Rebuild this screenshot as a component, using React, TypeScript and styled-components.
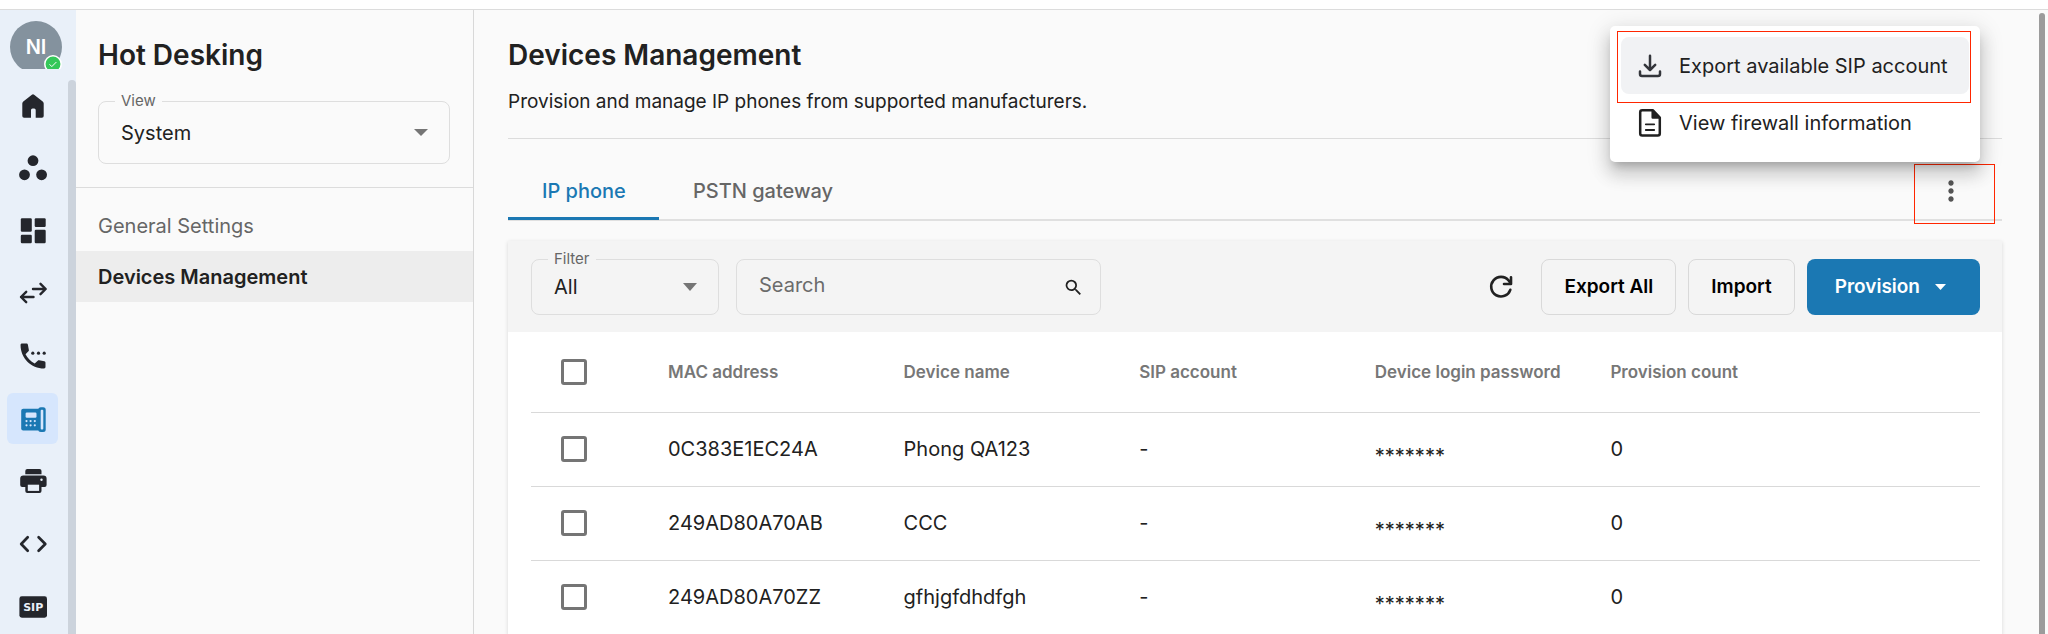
import React from 'react';
import styled, { createGlobalStyle } from 'styled-components';
import { MdSearch, MdMoreVert } from 'react-icons/md';

const Global = createGlobalStyle`
  *, *::before, *::after { box-sizing: border-box; }
  html, body, #root { height: 100%; }
  body {
    margin: 0;
    overflow: hidden;
    background: #fafafa;
    color: #212121;
    font-family: Inter, "Liberation Sans", sans-serif;
    font-size: 20px;
    line-height: 28px;
  }
  button, input, select { font: inherit; color: inherit; margin: 0; }
  ul { list-style: none; margin: 0; padding: 0; }
  h1, h2, p { margin: 0; }
`;

const Page = styled.div`
  height: 100%;
  display: flex;
  flex-direction: column;
`;

const TopStrip = styled.div`
  height: 10px;
  flex: none;
  background: #fff;
  border-bottom: 1px solid #dcdcdc;
`;

const Body = styled.div`
  flex: 1;
  min-height: 0;
  display: flex;
`;

/* Icon rail */

const Rail = styled.aside`
  width: 76px;
  flex: none;
  background: #e9f0f9;
  display: flex;
  flex-direction: column;
`;

const AvatarClip = styled.div`
  position: relative;
  width: 54px;
  height: 48px;
  margin: 11px 0 0 10px;
  flex: none;
  overflow: hidden;
`;

const Avatar = styled.button`
  width: 52px;
  height: 52px;
  border: 0;
  padding: 0;
  border-radius: 50%;
  background: #84929e;
  && { color: #fff; }
  font-weight: 600;
`;

const Presence = styled.svg`
  position: absolute;
  left: 34px;
  top: 34px;
`;

const RailScroll = styled.div`
  position: relative;
  flex: 1;
  min-height: 0;
  overflow: hidden;
  margin-top: 11px;
`;

const RailThumb = styled.div`
  position: absolute;
  right: 0;
  top: 0;
  bottom: 0;
  width: 8px;
  border-radius: 4px 4px 0 0;
  background: #ccd3dc;
`;

const RailList = styled.ul`
  display: flex;
  flex-direction: column;
  justify-content: space-between;
  height: 552px;
  padding-left: 7px;
`;

const RailLink = styled.a<{ $active?: boolean }>`
  display: flex;
  align-items: center;
  justify-content: center;
  width: 51px;
  height: 51px;
  border-radius: 6px;
  color: ${(p) => (p.$active ? '#1b78b3' : '#24262c')};
  background: ${(p) => (p.$active ? '#d6e6fd' : 'transparent')};
`;

/* Section panel */

const Panel = styled.aside`
  width: 398px;
  flex: none;
  border-right: 1px solid #d8d8d8;
`;

const PanelHead = styled.div`
  padding: 26px 23px 23px 22px;
  border-bottom: 1px solid #dcdcdc;
`;

const Title = styled.h1`
  font-size: 28px;
  line-height: 38px;
  font-weight: 600;
`;

const PanelList = styled.ul`
  padding-top: 12px;
`;

const PanelLink = styled.a<{ $active?: boolean }>`
  display: flex;
  align-items: center;
  height: 51px;
  padding: 0 22px;
  text-decoration: none;
  color: ${(p) => (p.$active ? '#212121' : '#666')};
  font-weight: ${(p) => (p.$active ? 600 : 400)};
  background: ${(p) => (p.$active ? '#ededed' : 'transparent')};
`;

/* Fields */

const FieldBox = styled.div<{ $w?: number; $h: number; $mt?: number }>`
  position: relative;
  flex: none;
  width: ${(p) => (p.$w ? p.$w + 'px' : 'auto')};
  height: ${(p) => p.$h}px;
  margin-top: ${(p) => p.$mt || 0}px;
`;

const FieldLabel = styled.label<{ $bg: string }>`
  position: absolute;
  left: 17px;
  top: -10px;
  padding: 0 6px;
  font-size: 15px;
  line-height: 20px;
  color: #666;
  background: ${(p) => p.$bg};
`;

const Select = styled.select`
  appearance: none;
  width: 100%;
  height: 100%;
  padding: 0 48px 0 22px;
  border: 1px solid #dedede;
  border-radius: 8px;
  background: transparent;
`;

const FieldIcon = styled.span<{ $right: number }>`
  position: absolute;
  right: ${(p) => p.$right}px;
  top: 0;
  bottom: 0;
  display: flex;
  align-items: center;
  pointer-events: none;
`;

const SearchInput = styled.input`
  width: 100%;
  height: 100%;
  padding: 0 48px 4px 22px;
  border: 1px solid #dedede;
  border-radius: 8px;
  background: transparent;
  &::placeholder { color: #6b6b6b; opacity: 1; }
`;

/* Main area */

const Main = styled.main`
  position: relative;
  flex: 1;
  min-width: 0;
  padding: 26px 46px 0 34px;
`;

const MainThumb = styled.div`
  position: absolute;
  right: 3px;
  top: 3px;
  bottom: 0;
  width: 6px;
  border-radius: 3px 3px 0 0;
  background: #9b9b9b;
`;

const Intro = styled.p`
  padding: 14px 0 22px;
  font-size: 19px;
  border-bottom: 1px solid #dcdcdc;
`;

const TabBar = styled.div`
  display: flex;
  align-items: flex-end;
  height: 82px;
  border-bottom: 2px solid #e0e0e0;
`;

const Tab = styled.button<{ $active?: boolean }>`
  height: 56px;
  padding: 1px 33px 0 34px;
  border: 0;
  border-bottom: 3px solid ${(p) => (p.$active ? '#1b78b3' : 'transparent')};
  margin-bottom: -1px;
  background: none;
  font-weight: 500;
  && { color: ${(p) => (p.$active ? '#1b78b3' : '#666')}; }
`;

const MenuAnchor = styled.div`
  position: relative;
  margin-left: auto;
  margin-right: 22px;
  height: 56px;
  display: flex;
  align-items: center;
`;

const KebabButton = styled.button`
  display: flex;
  align-items: center;
  justify-content: center;
  width: 58px;
  height: 56px;
  padding: 0;
  border: 0;
  background: none;
  && { color: #555; }
`;

const Highlight = styled.span<{ $inset: string }>`
  position: absolute;
  inset: ${(p) => p.$inset};
  border: 1px solid #ff2600;
  pointer-events: none;
`;

const Menu = styled.div`
  position: absolute;
  right: 0;
  bottom: 57px;
  width: 370px;
  height: 136px;
  padding: 11px 11px 0;
  border-radius: 5px;
  background: #fff;
  box-shadow: 0 7px 8px -4px rgba(0, 0, 0, 0.2), 0 12px 17px 2px rgba(0, 0, 0, 0.13), 0 5px 22px 4px rgba(0, 0, 0, 0.1);
`;

const MenuItem = styled.button<{ $active?: boolean }>`
  position: relative;
  display: flex;
  align-items: center;
  gap: 13px;
  width: 100%;
  height: 57px;
  padding: 0 0 0 13px;
  border: 0;
  border-radius: 8px;
  white-space: nowrap;
  background: ${(p) => (p.$active ? '#f1f2f4' : 'none')};
`;

/* Device card */

const Card = styled.section`
  margin-top: 20px;
  background: #fff;
  box-shadow: 0 1px 4px rgba(0, 0, 0, 0.14);
`;

const Toolbar = styled.div`
  display: flex;
  align-items: center;
  gap: 12px;
  padding: 18px 22px 17px 23px;
  background: #f4f4f4;
`;

const FilterGroup = styled.div`
  display: flex;
  gap: 17px;
  margin-right: auto;
`;

const IconButton = styled.button`
  display: flex;
  padding: 0;
  margin-right: 12px;
  border: 0;
  background: none;
`;

const Button = styled.button<{ $primary?: boolean }>`
  display: flex;
  align-items: center;
  justify-content: center;
  gap: 15px;
  height: 56px;
  padding: ${(p) => (p.$primary ? '0 34px 0 28px' : '0 22px')};
  border: ${(p) => (p.$primary ? '0' : '1px solid #d9d9d9')};
  border-radius: 8px;
  background: ${(p) => (p.$primary ? '#1b78b3' : 'transparent')};
  && {
    font-size: 19px;
    font-weight: 600;
    color: ${(p) => (p.$primary ? '#fff' : '#000')};
  }
`;

const TableWrap = styled.div`
  padding: 0 22px 0 23px;
`;

const Table = styled.table`
  width: 100%;
  table-layout: fixed;
  border-collapse: collapse;
`;

const CheckCol = styled.col`
  width: 114px;
`;

const EndCol = styled.col`
  width: 157px;
`;

const HeadCell = styled.th`
  height: 80px;
  padding: 0 0 0 23px;
  text-align: left;
  font-size: 17px;
  font-weight: 600;
  color: #777;
  white-space: nowrap;
  border-bottom: 1px solid #d9d9d9;
`;

const Cell = styled.td`
  height: 74px;
  padding: 0 0 0 23px;
  border-bottom: 1px solid #d9d9d9;
`;

const Secret = styled.span`
  display: block;
  padding-top: 14px;
  line-height: 20px;
`;

const Check = styled.input`
  appearance: none;
  display: block;
  width: 26px;
  height: 26px;
  border: 3px solid #757575;
  border-radius: 3px;
  && { margin-left: 7px; }
`;

const Caret = ({ w, h, fill }: { w: number; h: number; fill: string }) => (
  <svg width={w} height={h} viewBox="0 0 14 7" preserveAspectRatio="none" aria-hidden="true">
    <path d="M0 0h14L7 7z" fill={fill} />
  </svg>
);

const RailIcon = ({ children }: { children: React.ReactNode }) => (
  <svg width="32" height="32" viewBox="0 0 32 32" fill="currentColor" aria-hidden="true">
    {children}
  </svg>
);

const railItems: { name: string; active?: boolean; icon: React.ReactNode }[] = [
  {
    name: 'Home',
    icon: (
      <path d="M5.3 13.4q0-1.2 1-2L14.9 4.7q1.1-.8 2.2 0l8.600 6.700q1 .8 1 2V26q0 1.800-1.800 1.800h-6.200V19.900q0-1.500-1.500-1.500h-1.700q-1.500 0-1.500 1.500v7.900H7.100Q5.300 27.800 5.300 26z" />
    ),
  },
  {
    name: 'Groups',
    icon: (
      <>
        <circle cx="16" cy="8.700" r="5.400" />
        <circle cx="7.500" cy="22.800" r="5.400" />
        <circle cx="24.600" cy="22.800" r="5.400" />
      </>
    ),
  },
  {
    name: 'Dashboard',
    icon: (
      <>
        <rect x="3.800" y="3.300" width="11" height="13.500" rx="1.200" />
        <rect x="3.800" y="19.700" width="11" height="8.600" rx="1.200" />
        <rect x="17.700" y="3.300" width="11" height="8.600" rx="1.200" />
        <rect x="17.700" y="14.800" width="11" height="13.500" rx="1.200" />
      </>
    ),
  },
  {
    name: 'Transfers',
    icon: (
      <path
        d="M16 12h12.500M23.500 6.800l5.200 5.200-5.200 5.200M16.500 20H4M9.200 14.800 4 20l5.200 5.200"
        fill="none"
        stroke="currentColor"
        strokeWidth="2.400"
        strokeLinecap="round"
        strokeLinejoin="round"
      />
    ),
  },
  {
    name: 'Calls',
    icon: (
      <>
        <path
          transform="translate(-.6 -.6) scale(1.385)"
          d="M6.600 10.800c1.400 2.800 3.700 5.100 6.600 6.600l2.200-2c.3-.3.700-.4 1-.3l3.800.7c.5.1.8.5.8 1V20c0 .6-.5 1-1 1C10.600 21 3 13.400 3 4c0-.6.5-1 1-1h3.300c.5 0 .9.300 1 .8l.7 3.800c.1.400 0 .8-.3 1z"
        />
        <circle cx="15.800" cy="13.200" r="1.600" />
        <circle cx="21.500" cy="13.200" r="1.600" />
        <circle cx="27.200" cy="13.200" r="1.600" />
      </>
    ),
  },
  {
    name: 'Devices',
    active: true,
    icon: (
      <>
        <rect x="4.200" y="5.800" width="20" height="21.700" rx="2" />
        <rect x="21.300" y="4.200" width="7.400" height="24.800" rx="2.500" />
        <rect x="23.700" y="6.800" width="2.600" height="19.600" rx="1" fill="#d6e6fd" />
        <rect x="8.600" y="9.600" width="10.900" height="5.200" rx="1.200" fill="#d6e6fd" />
        <g fill="#d6e6fd">
          {[9.5, 13.6, 17.8].map((x) =>
            [18.1, 22.3].map((y) => <circle key={x + '-' + y} cx={x} cy={y} r="1.100" />),
          )}
        </g>
      </>
    ),
  },
  {
    name: 'Printers',
    icon: (
      <>
        <path d="M8.300 9.300V6q0-2 2-2h12.200q2 0 2 2v3.300z" />
        <path d="M6.400 10.400h20q3.200 0 3.200 3.200V20q0 2-2 2h-3.100v4q0 2-2 2H10.300q-2 0-2-2v-4H5.200q-2 0-2-2v-6.400q0-3.200 3.200-3.200z" />
        <rect x="10.800" y="19.700" width="11.300" height="6.200" fill="#e9f0f9" />
        <circle cx="24.500" cy="14.800" r="1.200" fill="#e9f0f9" />
      </>
    ),
  },
  {
    name: 'Developers',
    icon: (
      <path
        d="M10.700 9.300 4.200 16l6.500 6.700M21.600 9.300l6.700 6.700-6.700 6.700"
        fill="none"
        stroke="currentColor"
        strokeWidth="2.700"
        strokeLinecap="round"
        strokeLinejoin="round"
      />
    ),
  },
  {
    name: 'SIP',
    icon: (
      <>
        <rect x="2.400" y="5.300" width="27.600" height="21.400" rx="2.400" />
        <text x="16.200" y="20" textAnchor="middle" fontSize="11" fontWeight="700" fontFamily="DejaVu Sans, sans-serif" fill="#e9f0f9">
          SIP
        </text>
      </>
    ),
  },
];

const devices = [
  { mac: '0C383E1EC24A', name: 'Phong QA123' },
  { mac: '249AD80A70AB', name: 'CCC' },
  { mac: '249AD80A70ZZ', name: 'gfhjgfdhdfgh' },
];

export default function App() {
  return (
    <Page>
      <Global />
      <TopStrip />
      <Body>
        <Rail>
          <AvatarClip>
            <Avatar>NI</Avatar>
            <Presence width="18" height="18" viewBox="0 0 18 18" aria-hidden="true">
              <circle cx="9" cy="9" r="8.200" fill="#34c759" stroke="#fff" strokeWidth="1.500" />
              <path d="m5.500 9.300 2.300 2.300 4.600-4.600" fill="none" stroke="#fff" strokeWidth="1" />
            </Presence>
          </AvatarClip>
          <RailScroll>
            <nav aria-label="Primary">
              <RailList>
                {railItems.map((item) => (
                  <li key={item.name}>
                    <RailLink href="#" aria-label={item.name} $active={item.active}>
                      <RailIcon>{item.icon}</RailIcon>
                    </RailLink>
                  </li>
                ))}
              </RailList>
            </nav>
            <RailThumb />
          </RailScroll>
        </Rail>

        <Panel>
          <PanelHead>
            <Title as="h2">Hot Desking</Title>
            <FieldBox $h={63} $mt={27}>
              <Select id="view" defaultValue="System">
                <option>System</option>
              </Select>
              <FieldLabel htmlFor="view" $bg="#fafafa">View</FieldLabel>
              <FieldIcon $right={22}><Caret w={14} h={7} fill="#757575" /></FieldIcon>
            </FieldBox>
          </PanelHead>
          <nav aria-label="Hot Desking">
            <PanelList>
              <li><PanelLink href="#">General Settings</PanelLink></li>
              <li><PanelLink href="#" $active>Devices Management</PanelLink></li>
            </PanelList>
          </nav>
        </Panel>

        <Main>
          <Title>Devices Management</Title>
          <Intro>Provision and manage IP phones from supported manufacturers.</Intro>

          <TabBar>
            <Tab $active>IP phone</Tab>
            <Tab>PSTN gateway</Tab>
            <MenuAnchor>
              <KebabButton aria-label="More options"><MdMoreVert size={32} /></KebabButton>
              <Highlight $inset="1px -15px -5px -8px" />
              <Menu>
                <MenuItem $active>
                  <svg width="32" height="32" viewBox="0 0 32 32" fill="none" stroke="#33353a" strokeWidth="2.500" strokeLinecap="round" strokeLinejoin="round" aria-hidden="true">
                    <path d="M16 5.800v14M10.800 14.800l5.200 5.200 5.200-5.200M6 21.500V24q0 2 2 2h16q2 0 2-2v-2.500" />
                  </svg>
                  Export available SIP account
                  <Highlight $inset="-6px -2px -9px -4px" />
                </MenuItem>
                <MenuItem>
                  <svg width="32" height="32" viewBox="0 0 32 32" fill="none" stroke="#212121" strokeWidth="2.500" strokeLinecap="round" strokeLinejoin="round" aria-hidden="true">
                    <path d="M8.200 3.200h10.500l7.100 7.300v15.900q0 2-2 2H8.200q-2 0-2-2V5.200q0-2 2-2z" />
                    <path d="M18.700 3.800v6.700h6.500z" fill="#212121" />
                    <path d="M11.800 17.300h8.400M11.800 23h8.400" strokeWidth="1.800" />
                  </svg>
                  View firewall information
                </MenuItem>
              </Menu>
            </MenuAnchor>
          </TabBar>

          <Card>
            <Toolbar>
              <FilterGroup>
                <FieldBox $w={188} $h={56}>
                  <Select id="filter" defaultValue="All">
                    <option>All</option>
                  </Select>
                  <FieldLabel htmlFor="filter" $bg="#f4f4f4">Filter</FieldLabel>
                  <FieldIcon $right={22}><Caret w={14} h={8} fill="#757575" /></FieldIcon>
                </FieldBox>
                <FieldBox $w={365} $h={56}>
                  <SearchInput type="text" aria-label="Search" placeholder="Search" />
                  <FieldIcon $right={17}><MdSearch size={21} /></FieldIcon>
                </FieldBox>
              </FilterGroup>
              <IconButton aria-label="Refresh">
                <svg width="32" height="32" viewBox="0 0 32 32" fill="none" stroke="#212121" strokeWidth="2.600" strokeLinecap="round" strokeLinejoin="round" aria-hidden="true">
                  <path d="M25.300 18.800A9.800 9.800 0 1 1 23.600 9.500L25.800 12.200M26 6.200V13h-7" />
                </svg>
              </IconButton>
              <Button>Export All</Button>
              <Button>Import</Button>
              <Button $primary>Provision <Caret w={11} h={6} fill="#fff" /></Button>
            </Toolbar>
            <TableWrap>
              <Table>
                <colgroup>
                  <CheckCol />
                  <col /><col /><col /><col /><col />
                  <EndCol />
                </colgroup>
                <thead>
                  <tr>
                    <HeadCell><Check type="checkbox" aria-label="Select all devices" /></HeadCell>
                    <HeadCell>MAC address</HeadCell>
                    <HeadCell>Device name</HeadCell>
                    <HeadCell>SIP account</HeadCell>
                    <HeadCell>Device login password</HeadCell>
                    <HeadCell>Provision count</HeadCell>
                    <HeadCell />
                  </tr>
                </thead>
                <tbody>
                  {devices.map((d) => (
                    <tr key={d.mac}>
                      <Cell><Check type="checkbox" aria-label={'Select ' + d.mac} /></Cell>
                      <Cell>{d.mac}</Cell>
                      <Cell>{d.name}</Cell>
                      <Cell>-</Cell>
                      <Cell><Secret>*******</Secret></Cell>
                      <Cell>0</Cell>
                      <Cell />
                    </tr>
                  ))}
                </tbody>
              </Table>
            </TableWrap>
          </Card>
          <MainThumb />
        </Main>
      </Body>
    </Page>
  );
}
